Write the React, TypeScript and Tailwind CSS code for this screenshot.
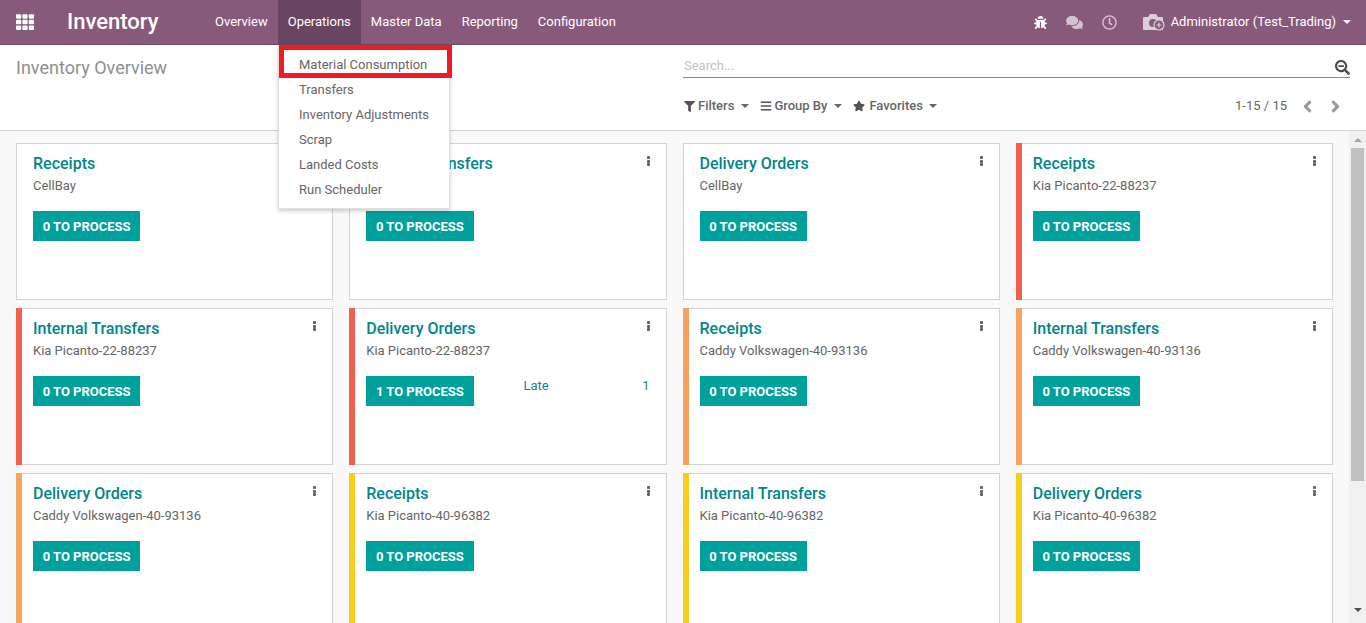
import { FaAngleLeft, FaAngleRight, FaBars, FaBug, FaComments, FaFilter, FaRegClock, FaSearchMinus, FaStar, FaTh } from 'react-icons/fa';

const RED = 'bg-[#f0604f]';
const ORANGE = 'bg-[#f4a460]';
const YELLOW = 'bg-[#f7cd1f]';

const cards = [
  { title: 'Receipts', sub: 'CellBay', count: 0, bar: '' },
  { title: 'Internal Transfers', sub: 'CellBay', count: 0, bar: '' },
  { title: 'Delivery Orders', sub: 'CellBay', count: 0, bar: '' },
  { title: 'Receipts', sub: 'Kia Picanto-22-88237', count: 0, bar: RED },
  { title: 'Internal Transfers', sub: 'Kia Picanto-22-88237', count: 0, bar: RED },
  { title: 'Delivery Orders', sub: 'Kia Picanto-22-88237', count: 1, bar: RED, late: 1 },
  { title: 'Receipts', sub: 'Caddy Volkswagen-40-93136', count: 0, bar: ORANGE },
  { title: 'Internal Transfers', sub: 'Caddy Volkswagen-40-93136', count: 0, bar: ORANGE },
  { title: 'Delivery Orders', sub: 'Caddy Volkswagen-40-93136', count: 0, bar: ORANGE },
  { title: 'Receipts', sub: 'Kia Picanto-40-96382', count: 0, bar: YELLOW },
  { title: 'Internal Transfers', sub: 'Kia Picanto-40-96382', count: 0, bar: YELLOW },
  { title: 'Delivery Orders', sub: 'Kia Picanto-40-96382', count: 0, bar: YELLOW },
];

const menu = ['Overview', 'Operations', 'Master Data', 'Reporting', 'Configuration'];
const opsItems = ['Material Consumption', 'Transfers', 'Inventory Adjustments', 'Scrap', 'Landed Costs', 'Run Scheduler'];

function Caret({ className }: { className: string }) {
  return <span className={`inline-block w-0 h-0 border-x-[4px] border-x-transparent border-t-[4px] ${className}`} />;
}

function Card({ card }: { card: (typeof cards)[number] }) {
  return (
    <div className="relative h-[157px] bg-white border border-[#ced4da] pt-[10px] pl-4 pr-4">
      {/* colour tag on the left edge */}
      {card.bar && <div className={`absolute -left-px -top-px -bottom-px w-[6px] ${card.bar}`} />}
      <div className="flex justify-between">
        <span className="text-[16px] leading-[20px] font-medium text-[#00868b]">{card.title}</span>
        <div className="w-[3px] h-[10px] mt-[2px] flex flex-col justify-between">
          <span className="block w-[3px] h-[3px] rounded-[1px] bg-[#5f5f5f]" />
          <span className="block w-[3px] h-[3px] rounded-[1px] bg-[#5f5f5f]" />
          <span className="block w-[3px] h-[3px] rounded-[1px] bg-[#5f5f5f]" />
        </div>
      </div>
      <div className="text-[13px] leading-[20px] mt-[2px] text-[#666]">{card.sub}</div>
      <div className="flex mt-[15px]">
        <div className="w-[107.3px] h-[30px] pt-px bg-[#00a09d] text-white text-[13px] font-bold flex items-center justify-center whitespace-nowrap">
          {card.count} TO PROCESS
        </div>
        {card.late && (
          <div className="flex-1 flex justify-between pl-[50px] text-[13px] leading-[20px] text-[#1a7f9c]">
            <span>Late</span>
            <span>{card.late}</span>
          </div>
        )}
      </div>
    </div>
  );
}

export default function App() {
  return (
    <div className="relative h-screen overflow-hidden flex flex-col bg-white text-[13px] text-[#666] font-['Roboto',sans-serif]">
      {/* top navbar */}
      <header className="h-[45px] shrink-0 bg-[#875a7b] border-b border-[#6b4a63] flex items-center text-white">
        <FaTh className="ml-4 text-[18px] w-[18px]" />
        <div className="ml-[33px] mb-[2px] text-[22px] font-medium w-[138px]">Inventory</div>
        <nav className="flex h-full">
          {menu.map((m) => (
            <div key={m} className={`px-[10px] flex items-center ${m === 'Operations' ? 'bg-[#6a4561]' : ''}`}>{m}</div>
          ))}
        </nav>
        <div className="ml-auto flex items-center h-full">
          <FaBug className="text-[13px] mr-[19px]" />
          <FaComments className="text-[17px] text-[#d3c3cf] mr-[19px]" />
          <FaRegClock className="text-[15px] text-[#d3c3cf] mr-[26px]" />
          <svg width="22" height="18" viewBox="0 0 22 18" className="mr-[6px]">
            <path d="M1 4h4l2-3h6l2 3h4a1 1 0 0 1 1 1v11a1 1 0 0 1-1 1H1a1 1 0 0 1-1-1V5a1 1 0 0 1 1-1z" fill="#d9d0d6" />
            <circle cx="10" cy="10" r="4" fill="#875a7b" />
            <circle cx="16" cy="12" r="5" fill="#875a7b" stroke="#d9d0d6" strokeWidth="1.2" />
            <path d="M13.5 12h5M16 9.5v5" stroke="#d9d0d6" strokeWidth="1.2" />
          </svg>
          <span>Administrator (Test_Trading)</span>
          <Caret className="border-t-white ml-[7px] mr-[15px]" />
        </div>
      </header>

      {/* control panel */}
      <section className="h-[86px] shrink-0 border-b border-[#ced4da] flex pl-4 pr-4 bg-white">
        <div className="w-[667px] text-[18px] leading-[24px] pt-[11px] text-[#8f8f8f]">Inventory Overview</div>
        <div className="flex-1">
          <div className="h-[33px] border-b border-[#888] flex items-end justify-between pb-[1px] pl-[1px]">
            <span className="text-[#c2c2c2] leading-[20px]">Search...</span>
            <FaSearchMinus className="text-[#4c4c4c] text-[15px] mb-[1px]" />
          </div>
          <div className="flex items-center mt-[18px] h-[20px]">
            <FaFilter className="text-[11px] ml-px mr-[3px] text-[#555]" />
            <span className="font-medium">Filters</span>
            <Caret className="border-t-[#666] ml-[7px] mr-[11px]" />
            <FaBars className="text-[12px] mr-[2px] text-[#555]" />
            <span className="font-medium">Group By</span>
            <Caret className="border-t-[#666] ml-[7px] mr-[11px]" />
            <FaStar className="text-[12px] mr-[4px] text-[#555]" />
            <span className="font-medium">Favorites</span>
            <Caret className="border-t-[#666] ml-[6px]" />
            <span className="ml-auto">1-15 / 15</span>
            <FaAngleLeft className="ml-[11px] text-[#999] text-[19px]" />
            <FaAngleRight className="ml-[9px] mr-[5px] text-[#999] text-[19px]" />
          </div>
        </div>
      </section>

      {/* kanban + scrollbar */}
      <div className="flex-1 min-h-0 flex bg-[#f9f9f9] overflow-hidden">
        <div className="flex-1 min-w-0 pt-3 px-4">
          <div className="grid grid-cols-4 gap-x-4 gap-y-2">
            {cards.map((c, i) => (
              <Card key={i} card={c} />
            ))}
          </div>
        </div>
        <div className="w-[17px] shrink-0 bg-[#f0f0f0] flex flex-col items-center pt-[7px]">
          <span className="block w-0 h-0 border-x-[4px] border-x-transparent border-b-[4px] border-b-[#a3a3a3]" />
          <div className="w-[13px] h-[333px] bg-[#c1c1c1] mt-[6px]" />
          <div className="mt-auto mb-[6px]">
            <Caret className="border-t-[#505050] block" />
          </div>
        </div>
      </div>

      {/* open Operations dropdown */}
      <div className="absolute left-[278px] top-[45px] w-[172px] h-[164px] bg-white border border-[#e0e0e0] shadow-[0_2px_4px_rgba(0,0,0,0.2)] pt-[6px]">
        {opsItems.map((o) => (
          <div key={o} className="h-[25px] pl-[20px] flex items-center whitespace-nowrap">{o}</div>
        ))}
        <div className="absolute left-0 -top-px w-[173px] h-[33px] border-[5px] border-[#ed1c24]" />
      </div>
    </div>
  );
}
